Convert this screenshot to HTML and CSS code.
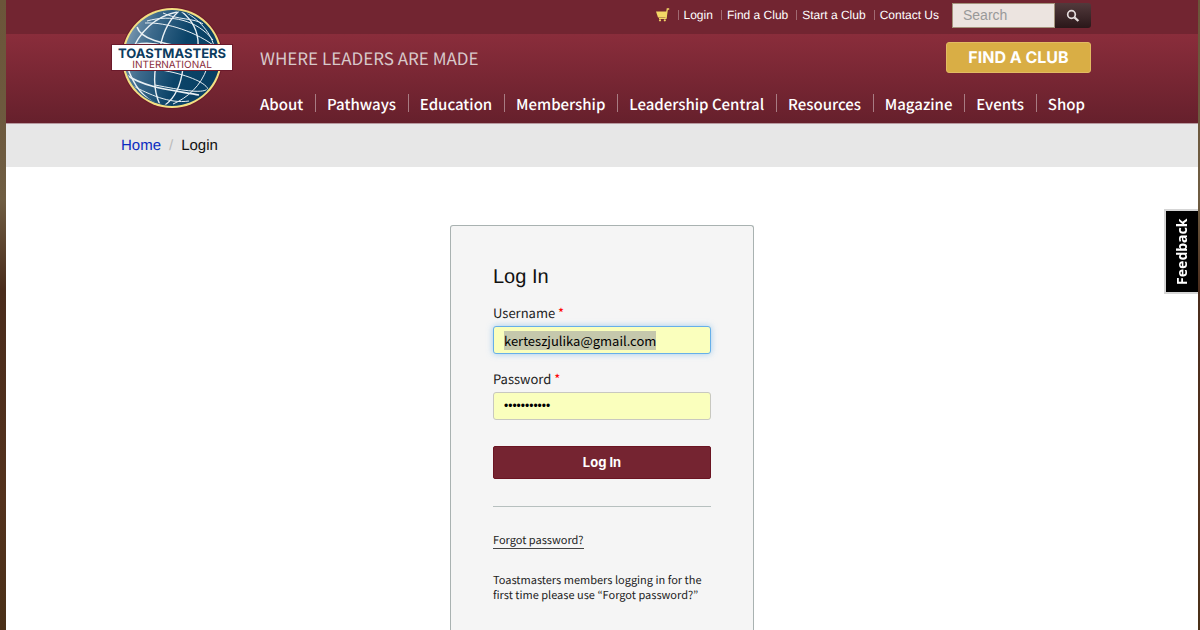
FILE: index.html
```
<!DOCTYPE html>
<html lang="en">
<head>
  <meta charset="UTF-8">
  <meta name="viewport" content="width=device-width, initial-scale=1">
  <title>Toastmasters International - Login</title>
  <link rel="stylesheet" href="styles.css">
</head>
<body>

<div class="page">
  <header class="site-header">
    <div class="container header-inner">
      <a class="logo" href="#" aria-label="Toastmasters International">
        <svg viewBox="0 0 122 104" width="122" height="104">
          <defs>
            <linearGradient id="globe" x1="0" y1="0.3" x2="1" y2="0.6">
              <stop offset="0" stop-color="#7f9bb3"/>
              <stop offset="0.25" stop-color="#3d6a8c"/>
              <stop offset="0.6" stop-color="#0c4469"/>
              <stop offset="1" stop-color="#073f62"/>
            </linearGradient>
            <clipPath id="globeClip"><circle cx="61" cy="52" r="47"/></clipPath>
          </defs>
          <circle cx="61" cy="52" r="51" fill="#6b1a2b"/>
          <circle cx="61" cy="52" r="50" fill="#f3df83"/>
          <circle cx="61" cy="52" r="48" fill="url(#globe)"/>
          <g fill="none" stroke="#e9f0f4" clip-path="url(#globeClip)">
            <path stroke-width="1.4" d="M66 6C46 10 28 24 19 50M16 60C22 78 32 92 46 98"/>
            <path stroke-width="1.4" d="M68 5C58 14 50 28 48 50C42 64 42 84 49 99"/>
            <path stroke-width="1.4" d="M70 5C84 16 88 28 87 42M72 62C70 78 64 92 54 99"/>
            <path stroke-width="1" d="M76 7C94 18 104 34 104 48M96 62C90 80 76 92 62 98"/>
            <path stroke-width="1.6" d="M26 21C30 34 54 38 76 42M14 43C26 36 40 36 54 40"/>
            <path stroke-width="1" d="M36 15C60 8 86 14 102 34M52 7C66 14 84 12 92 18M34 17C56 16 86 26 106 42"/>
            <path stroke-width="1.6" d="M14 68C34 82 60 84 88 89"/>
            <path stroke-width="1" d="M50 64C74 68 94 76 97 83C90 88 70 84 44 79M22 80C38 88 58 98 78 95"/>
          </g>
          <rect x="0" y="38" width="122" height="27" fill="#6b1a2b"/>
          <rect x="1" y="39" width="120" height="25" fill="#fff"/>
          <text class="logo-name" x="61" y="52" text-anchor="middle">TOASTMASTERS</text>
          <text class="logo-sub" x="61" y="62" text-anchor="middle">INTERNATIONAL</text>
        </svg>
      </a>

      <div class="header-main">
        <div class="top-bar">
          <ul class="top-links">
            <li>
              <a href="#" aria-label="Cart">
                <svg class="cart" viewBox="0 0 14 14" width="14" height="14">
                  <path d="M0 3.5h11L10.4 9.5H2z" fill="#f3d767"/>
                  <path d="M13.2 1h-1.9L10 10.4H3" fill="none" stroke="#f3d767" stroke-width="1.3"/>
                  <circle cx="4" cy="12.3" r="1.1" fill="#f3d767"/>
                  <circle cx="8.8" cy="12.3" r="1.1" fill="#f3d767"/>
                </svg>
              </a>
            </li>
            <li><a href="#">Login</a></li>
            <li><a href="#">Find a Club</a></li>
            <li><a href="#">Start a Club</a></li>
            <li><a href="#">Contact Us</a></li>
          </ul>
          <form class="search">
            <input type="text" placeholder="Search" aria-label="Search">
            <button type="button" aria-label="Search">
              <svg viewBox="0 0 14 14" width="14" height="14" fill="none" stroke="#e4dcdc">
                <circle cx="5.5" cy="5.5" r="3.8" stroke-width="1.7"/>
                <path d="M8.4 8.4L12.4 12" stroke-width="2.3"/>
              </svg>
            </button>
          </form>
        </div>

        <div class="tagline-row">
          <p class="tagline">WHERE LEADERS ARE MADE</p>
          <a class="find-club" href="#">FIND A CLUB</a>
        </div>

        <nav>
          <ul class="main-nav">
            <li><a href="#">About</a></li>
            <li><a href="#">Pathways</a></li>
            <li><a href="#">Education</a></li>
            <li><a href="#">Membership</a></li>
            <li><a href="#">Leadership Central</a></li>
            <li><a href="#">Resources</a></li>
            <li><a href="#">Magazine</a></li>
            <li><a href="#">Events</a></li>
            <li><a href="#">Shop</a></li>
          </ul>
        </nav>
      </div>
    </div>
  </header>

  <div class="breadcrumb">
    <div class="container breadcrumb-inner">
      <a href="#">Home</a>
      <span class="slash">/</span>
      <span>Login</span>
    </div>
  </div>

  <main>
    <form class="login-card">
      <h1>Log In</h1>
      <label for="username">Username <span class="required">*</span></label>
      <input type="text" id="username" value="kerteszjulika@gmail.com">
      <label for="password">Password <span class="required">*</span></label>
      <input type="password" id="password" value="toastmaster">
      <button type="button" class="login-button">Log In</button>
      <hr>
      <a class="forgot" href="#">Forgot password?</a>
      <p>Toastmasters members logging in for the first time please use “Forgot password?”</p>
    </form>
  </main>
</div>

<button type="button" class="feedback">Feedback</button>

<script>
  // Start with the saved username selected
  const username = document.getElementById("username");
  username.focus();
  username.select();
</script>

</body>
</html>
```
FILE: styles.css
```
* {
  box-sizing: border-box;
}
body {
  margin: 0;
  padding: 0 2px 0 6px;
  background: linear-gradient(#6b5539 0, #6f5d42 200px, #4a2c1c 290px, #53321d 500px, #4a3018 630px);
  font-family: "Liberation Sans", Arial, sans-serif;
  color: #111;
  text-rendering: geometricPrecision;
}
ul {
  list-style: none;
  margin: 0;
  padding: 0;
}
a {
  color: inherit;
  text-decoration: none;
}
.page {
  min-height: 100vh;
  background: #fff;
}
.container {
  max-width: 982px;
  margin: 0 auto;
}

/* Header */
.site-header {
  background: linear-gradient(#722531 34px, #8a2d3b 34px, #66202c 100%);
  color: #fff;
  border-bottom: 1px solid #b79aa0;
}
.header-inner {
  display: flex;
  gap: 27px;
  padding-right: 2px;
}
.logo {
  flex: none;
  padding-top: 6px;
}
.logo svg {
  display: block;
}
.logo-name {
  font: 700 13px Inter, sans-serif;
  fill: #0c3c60;
}
.logo-sub {
  font: 400 10px Inter, sans-serif;
  fill: #8a2d3b;
}
.header-main {
  flex: 1;
}
.top-bar {
  display: flex;
  justify-content: flex-end;
  align-items: flex-start;
  height: 34px;
  padding-top: 3px;
}
.top-links {
  display: flex;
  align-items: center;
  height: 24px;
  margin-right: 13px;
  font-size: 12px;
}
.top-links li {
  display: flex;
  align-items: center;
}
.top-links li + li::before {
  content: "";
  height: 10px;
  margin: 0 5px 0 8px;
  border-left: 1px solid #a06a72;
}
.cart {
  display: block;
}
.search {
  display: flex;
  height: 25px;
}
.search input {
  width: 103px;
  padding: 0 10px 2px;
  border: 1px solid #a3937c;
  border-radius: 0;
  background: #ece4e0;
  font: 14px "Liberation Sans", Arial, sans-serif;
}
.search input::placeholder {
  color: #999;
}
.search button {
  display: flex;
  align-items: center;
  justify-content: center;
  width: 36px;
  padding: 0;
  border: 0;
  border-radius: 0 3px 3px 0;
  background: linear-gradient(#523a3c, #2a1719);
}
.tagline-row {
  display: flex;
  justify-content: space-between;
  align-items: center;
  padding-top: 8px;
}
.tagline {
  margin: 0;
  font: 17px/24px "Noto Sans CJK KR", sans-serif;
  color: #d8c8ca;
}
.find-club {
  width: 145px;
  border: 1px solid #e2bb62;
  border-radius: 3px;
  background: #d9ae45;
  font: 700 16px/29px Inter, sans-serif;
  text-align: center;
}
.main-nav {
  display: flex;
  justify-content: space-between;
  padding: 19px 6px 6px 0;
  font: 500 15px/25px "Noto Sans CJK KR", sans-serif;
}
.main-nav li {
  display: flex;
  white-space: nowrap;
}
.main-nav li + li::before {
  content: "";
  height: 18px;
  margin: 2px 11px 0 0;
  border-left: 1px solid #a87c83;
}

/* Breadcrumb */
.breadcrumb {
  background: #e7e7e7;
}
.breadcrumb-inner {
  display: flex;
  gap: 8px;
  padding: 1px 10px 0;
  font-size: 15px;
  line-height: 42px;
}
.breadcrumb a {
  color: #0a2cc0;
}
.slash {
  color: #bbb;
}

/* Login form */
main {
  padding: 58px 20px 0;
}
.login-card {
  width: 304px;
  margin: 0 auto;
  padding: 38px 42px 36px;
  border: 1px solid #a9b2b1;
  border-bottom: 0;
  border-radius: 3px 3px 0 0;
  background: #f5f5f5;
  font-family: "Noto Sans CJK KR", sans-serif;
}
.login-card h1 {
  margin: 0 0 12px;
  font: 400 20px/26px "Liberation Sans", Arial, sans-serif;
}
.login-card label {
  display: block;
  margin-bottom: 2px;
  font-size: 13px;
  line-height: 22px;
  color: #222;
}
.required {
  color: #f00;
}
.login-card input {
  display: block;
  width: 100%;
  height: 28px;
  margin-bottom: 14px;
  padding: 0 10px;
  border: 1px solid #c8c8c0;
  border-radius: 3px;
  background: #faffbd;
  font: 13px "Noto Sans CJK KR", sans-serif;
  color: #000;
}
.login-card input[type="password"] {
  font: 12px "Liberation Sans", Arial, sans-serif;
}
.login-card input:focus {
  outline: none;
  border-color: #66afe9;
  box-shadow: 0 0 6px rgba(102, 175, 233, 0.6);
}
.login-card input::selection {
  background: #c5c8ac;
  color: #000;
}
.login-button {
  width: 100%;
  margin: 12px 0 27px;
  padding: 0;
  border: 1px solid #6b1422;
  border-radius: 2px;
  background: #752431;
  color: #fff;
  font: 700 13px/31px Inter, sans-serif;
}
.login-card hr {
  margin: 0 0 26px;
  border: 0;
  border-top: 1px solid #b7c0bf;
}
.forgot {
  display: block;
  width: fit-content;
  border-bottom: 1px solid #444;
  font-size: 11px;
  line-height: 15px;
  color: #222;
}
.login-card p {
  margin: 24px 0 0;
  font-size: 11px;
  line-height: 15px;
  color: #222;
}

/* Feedback tab on the right edge */
.feedback {
  position: fixed;
  top: 209px;
  right: 2px;
  width: 34px;
  height: 85px;
  padding: 0;
  border: 2px solid #d5d5d5;
  border-left: 0;
  background: #000;
  color: #fff;
  font: 700 14px "Noto Sans", sans-serif;
  writing-mode: vertical-rl;
  transform: rotate(180deg);
}
```
